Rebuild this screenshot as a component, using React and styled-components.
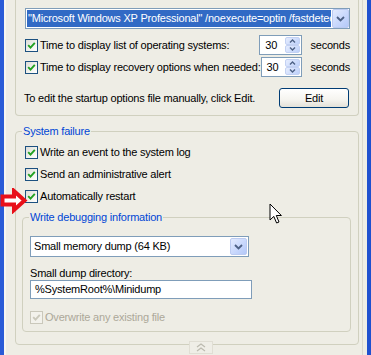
import React from "react";
import styled, { createGlobalStyle } from "styled-components";

const GlobalStyle = createGlobalStyle`
  html, body {
    margin: 0;
    padding: 0;
  }
  body {
    background: #eeede5;
    font-family: "Liberation Sans", Arial, sans-serif;
    font-size: 11px;
    letter-spacing: -0.2px;
    color: #000;
  }
`;

const Check = ({ disabled }) => (
  <CheckBox $disabled={disabled}>
    <svg width="9" height="9" viewBox="0 0 9 9">
      <polyline
        points="1.2,4.2 3.5,6.6 7.8,1.8"
        fill="none"
        stroke={disabled ? "#cac8bb" : "#21a121"}
        strokeWidth="1.9"
      />
    </svg>
  </CheckBox>
);

const DropArrow = () => (
  <svg width="9" height="6" viewBox="0 0 9 6">
    <polyline points="1,1 4.5,4.5 8,1" fill="none" stroke="#4d6185" strokeWidth="1.8" />
  </svg>
);

const App = () => {
  return (
    <Root>
      <GlobalStyle />
      <Frame>
        <Dialog>
          <Content>
            <TopGroup>
              <Combo>
                <Highlight>
                  "Microsoft Windows XP Professional" /noexecute=optin /fastdetect
                </Highlight>
                <DropButton>
                  <DropArrow />
                </DropButton>
              </Combo>
              <SpinRow $gap={6}>
                <Check />
                <SpinLabel>Time to display list of operating systems:</SpinLabel>
                <Spinner value="30" />
                <Unit>seconds</Unit>
              </SpinRow>
              <SpinRow $gap={2}>
                <Check />
                <SpinLabel>Time to display recovery options when needed:</SpinLabel>
                <Spinner value="30" />
                <Unit>seconds</Unit>
              </SpinRow>
              <EditRow>
                <EditText>To edit the startup options file manually, click Edit.</EditText>
                <EditButton>Edit</EditButton>
              </EditRow>
            </TopGroup>

            <FailureGroup>
              <Legend>System failure</Legend>
              <CheckRow $first>
                <Check />
                <CheckText>Write an event to the system log</CheckText>
              </CheckRow>
              <CheckRow>
                <Check />
                <CheckText>Send an administrative alert</CheckText>
              </CheckRow>
              <CheckRow>
                <Check />
                <CheckText>Automatically restart</CheckText>
              </CheckRow>

              <DebugGroup>
                <DebugLegend>Write debugging information</DebugLegend>
                <Select>
                  <SelectText>Small memory dump (64 KB)</SelectText>
                  <DropButton>
                    <DropArrow />
                  </DropButton>
                </Select>
                <FieldLabel>Small dump directory:</FieldLabel>
                <TextInput>%SystemRoot%\Minidump</TextInput>
                <DisabledRow>
                  <Check disabled />
                  <CheckText $disabled>Overwrite any existing file</CheckText>
                </DisabledRow>
              </DebugGroup>
            </FailureGroup>
          </Content>
          <Rim />
        </Dialog>
      </Frame>

      <RedArrow width="30" height="26" viewBox="0 0 30 26">
        <polygon
          points="3.5,8.5 15,8.5 15,3 25.5,12.5 15,22 15,16.5 3.5,16.5"
          fill="#fff"
          stroke="#e8101a"
          strokeWidth="4"
          strokeLinejoin="miter"
        />
      </RedArrow>

      <Pointer width="14" height="22" viewBox="0 0 14 22">
        <path
          d="M1 1 L1 17 L4.8 13.4 L7.6 20 L10 19 L7.3 12.5 L12.4 12.5 Z"
          fill="#fff"
          stroke="#000"
          strokeWidth="1"
          strokeLinejoin="round"
        />
      </Pointer>

      <CollapseHandle>
        <svg width="12" height="9" viewBox="0 0 12 9">
          <polyline points="2,4 6,1 10,4" fill="none" stroke="#bdbbb0" strokeWidth="1.3" />
          <polyline points="2,8 6,5 10,8" fill="none" stroke="#bdbbb0" strokeWidth="1.3" />
        </svg>
      </CollapseHandle>
    </Root>
  );
};

const Spinner = ({ value }) => (
  <SpinBox>
    <SpinValue>{value}</SpinValue>
    <SpinButtons>
      <SpinButton>
        <svg width="7" height="4" viewBox="0 0 7 4">
          <polyline points="1,3.5 3.5,1 6,3.5" fill="none" stroke="#4d6185" strokeWidth="1.4" />
        </svg>
      </SpinButton>
      <SpinButton>
        <svg width="7" height="4" viewBox="0 0 7 4">
          <polyline points="1,0.5 3.5,3 6,0.5" fill="none" stroke="#4d6185" strokeWidth="1.4" />
        </svg>
      </SpinButton>
    </SpinButtons>
  </SpinBox>
);

const Root = styled.div`
  position: relative;
  width: 371px;
  height: 355px;
  overflow: hidden;
`;

const Frame = styled.div`
  display: flex;
  height: 355px;
  box-sizing: border-box;
  border-left: 4px solid #2a5bd7;
  border-right: 4px solid #1f50cf;
  background: #eeede5;
`;

const Dialog = styled.div`
  flex: 1;
  display: flex;
  border-left: 2px solid #f7f6f1;
  padding-left: 9px;
`;

const Content = styled.div`
  width: 344px;
  display: flex;
  flex-direction: column;
`;

const Rim = styled.div`
  width: 1px;
  margin-left: 3px;
  background: #d8d6cc;
`;

const TopGroup = styled.div`
  height: 116px;
  box-sizing: border-box;
  border: 1px solid #d0d0bf;
  border-top: none;
  border-radius: 0 0 4px 4px;
  padding: 8px 8px 0 9px;
  display: flex;
  flex-direction: column;
`;

const Combo = styled.div`
  height: 21px;
  box-sizing: border-box;
  border: 1px solid #7f9db9;
  background: #fff;
  display: flex;
`;

const Highlight = styled.div`
  width: 304px;
  margin: 1px 0 1px 1px;
  padding-left: 1px;
  box-sizing: border-box;
  background: #316ac5;
  color: #fff;
  line-height: 17px;
  white-space: nowrap;
  overflow: hidden;
`;

const DropButton = styled.div`
  width: 17px;
  margin-left: auto;
  box-sizing: border-box;
  border: 1px solid #bccbf1;
  border-radius: 2px;
  background: linear-gradient(135deg, #e3ebfe 0%, #c6d6fc 60%, #b3c8f8 100%);
  display: flex;
  align-items: center;
  justify-content: center;
`;

const SpinRow = styled.div`
  display: flex;
  align-items: center;
  height: 20px;
  margin-top: ${(p) => p.$gap}px;
  white-space: nowrap;
`;

const CheckBox = styled.span`
  flex: none;
  width: 13px;
  height: 13px;
  box-sizing: border-box;
  border: 1px solid ${(p) => (p.$disabled ? "#cac8bb" : "#1c5180")};
  background: ${(p) =>
    p.$disabled ? "#f3f2ec" : "linear-gradient(135deg, #dcdcd7 0%, #f4f4f0 60%, #fff 100%)"};
  display: flex;
  align-items: center;
  justify-content: center;
`;

const SpinLabel = styled.span`
  width: 226px;
  padding-left: 2px;
  box-sizing: border-box;
`;

const SpinBox = styled.div`
  width: 44px;
  height: 20px;
  box-sizing: border-box;
  border: 1px solid #7f9db9;
  background: #fff;
  display: flex;
`;

const SpinValue = styled.span`
  flex: 1;
  padding-left: 5px;
  line-height: 18px;
`;

const SpinButtons = styled.div`
  width: 15px;
  margin: 1px;
  display: flex;
  flex-direction: column;
`;

const SpinButton = styled.div`
  flex: 1;
  box-sizing: border-box;
  border: 1px solid #c3d1f3;
  border-radius: 2px;
  background: linear-gradient(135deg, #e6edfe, #bdd0fa);
  display: flex;
  align-items: center;
  justify-content: center;
`;

const Unit = styled.span`
  margin-left: 8px;
`;

const EditRow = styled.div`
  display: flex;
  align-items: center;
  height: 20px;
  margin-top: 11px;
`;

const EditText = styled.span`
  margin-left: -1px;
  white-space: nowrap;
`;

const EditButton = styled.div`
  margin-left: auto;
  margin-right: 1px;
  width: 70px;
  height: 20px;
  box-sizing: border-box;
  border: 1px solid #003c74;
  border-radius: 3px;
  background: linear-gradient(180deg, #ffffff 0%, #f5f4ef 60%, #e3e1d8 100%);
  display: flex;
  align-items: center;
  justify-content: center;
`;

const FailureGroup = styled.fieldset`
  margin: 9px 0 0;
  min-width: 0;
  border: 1px solid #d0d0bf;
  border-radius: 4px;
  padding: 0 7px 12px 6px;
  display: flex;
  flex-direction: column;
`;

const Legend = styled.legend`
  padding: 0 1px;
  line-height: 13px;
  color: #0046d5;
`;

const CheckRow = styled.div`
  display: flex;
  align-items: center;
  height: 13px;
  padding-left: 3px;
  margin-top: ${(p) => (p.$first ? 8 : 9)}px;
  white-space: nowrap;
`;

const CheckText = styled.span`
  margin-left: 2px;
  line-height: 13px;
  color: ${(p) => (p.$disabled ? "#aca899" : "#000")};
`;

const DebugGroup = styled.fieldset`
  margin: 8px 0 0;
  min-width: 0;
  border: 1px solid #d0d0bf;
  border-radius: 4px;
  padding: 0 7px 7px 7px;
  display: flex;
  flex-direction: column;
  align-items: flex-start;
`;

const DebugLegend = styled(Legend)`
  margin-left: -1px;
`;

const Select = styled.div`
  margin-top: 12px;
  width: 219px;
  height: 21px;
  box-sizing: border-box;
  border: 1px solid #7f9db9;
  background: #fff;
  display: flex;
  padding: 1px;
`;

const SelectText = styled.span`
  padding-left: 2px;
  line-height: 17px;
`;

const FieldLabel = styled.div`
  margin-top: 10px;
  line-height: 13px;
`;

const TextInput = styled.div`
  width: 222px;
  height: 19px;
  box-sizing: border-box;
  border: 1px solid #7f9db9;
  background: #fff;
  padding-left: 4px;
  line-height: 17px;
`;

const DisabledRow = styled.div`
  display: flex;
  align-items: center;
  height: 13px;
  margin-top: 12px;
  white-space: nowrap;
`;

const RedArrow = styled.svg`
  position: absolute;
  left: -1px;
  top: 188px;
`;

const Pointer = styled.svg`
  position: absolute;
  left: 269px;
  top: 203px;
`;

const CollapseHandle = styled.div`
  position: absolute;
  left: 189px;
  top: 341px;
  width: 24px;
  height: 13px;
  box-sizing: border-box;
  border: 1px solid #e0ded4;
  background: #efeee7;
  display: flex;
  align-items: center;
  justify-content: center;
`;

export default App;
